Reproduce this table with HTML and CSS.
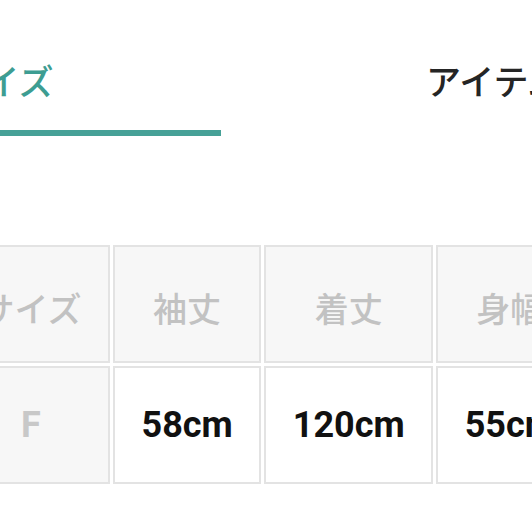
FILE: index.html
```html
<!DOCTYPE html>
<html lang="ja">
<head>
<meta charset="utf-8">
<title>サイズ</title>
<link rel="stylesheet" href="styles.css">
</head>
<body>
<div class="page">
  <nav class="tabs">
    <div class="tab tab-active">サイズ</div>
    <div class="tab tab-other">アイテム情報</div>
  </nav>
  <table class="size-table">
    <tr>
      <th class="head">サイズ</th>
      <th class="head">袖丈</th>
      <th class="head">着丈</th>
      <th class="head">身幅</th>
    </tr>
    <tr>
      <td class="head size-name">F</td>
      <td class="value">58cm</td>
      <td class="value">120cm</td>
      <td class="value">55cm</td>
    </tr>
  </table>
</div>
</body>
</html>
```

FILE: styles.css
```css
html, body {
  margin: 0;
  padding: 0;
  background: #ffffff;
  overflow: hidden;
}

.page {
  width: 532px;
  height: 532px;
  overflow: hidden;
  font-family: "Noto Sans CJK JP", "Noto Sans", sans-serif;
}

.tabs {
  display: flex;
  padding-top: 60px;
  white-space: nowrap;
}

.tab {
  flex: none;
  font-size: 35px;
  line-height: 40px;
  font-weight: 500;
  padding-bottom: 30px;
}

.tab-active {
  width: 439px;
  margin-left: -218px;
  text-align: center;
  color: #3d9d92;
  border-bottom: 6px solid #46a197;
}

.tab-other {
  padding-left: 205px;
  color: #252525;
}

.size-table {
  margin-top: 106px;
  margin-left: -51px;
  border-collapse: separate;
  border-spacing: 3px;
  white-space: nowrap;
}

.size-table th,
.size-table td {
  border: 2px solid #e3e3e3;
  height: 114px;
  padding: 0 26.5px;
  text-align: center;
  vertical-align: middle;
}

.size-table th.head {
  height: 107px;
  padding-top: 7px;
}

.head {
  background: #f7f7f7;
  color: #c2c2c2;
  font-size: 34px;
  font-weight: 500;
}

.size-name {
  font-family: Roboto, "Liberation Sans", sans-serif;
  font-weight: 700;
  font-size: 36px;
  color: #c8c8c8;
}

.value {
  background: #ffffff;
  color: #111111;
  font-family: Roboto, "Liberation Sans", sans-serif;
  font-weight: 700;
  font-size: 36px;
}
```
